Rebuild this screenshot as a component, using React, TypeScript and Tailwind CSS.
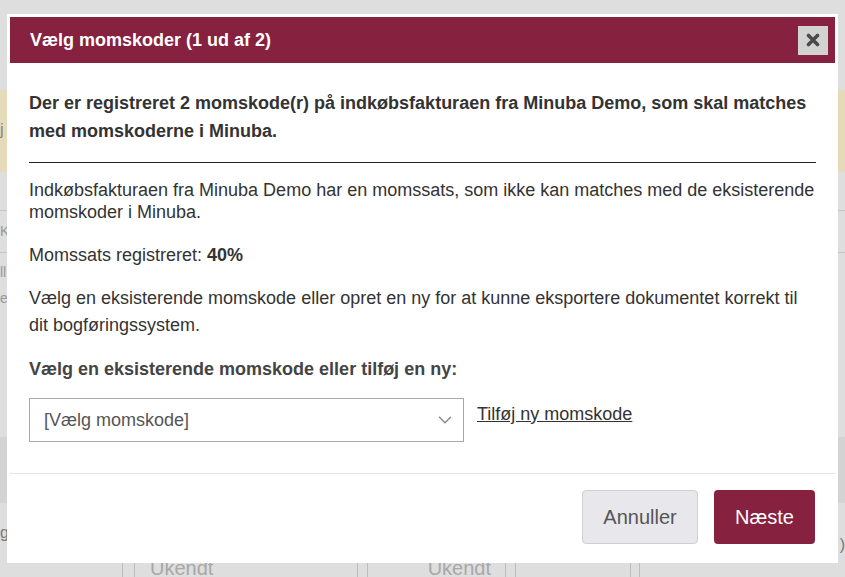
import { ChevronDown } from 'lucide-react';

const CloseIcon = () => (
	<svg width="14" height="14" viewBox="0 0 14 14" className="block">
		<path
			d="M2.5 2.5 L11.5 11.5 M11.5 2.5 L2.5 11.5"
			stroke="#4a4a4a"
			strokeWidth="3.6"
			strokeLinecap="round"
		/>
	</svg>
);

// dimmed page behind the dialog
const Backdrop = () => {
	return (
		<div className="flex flex-col h-[577px] w-[845px] bg-[#dedede] text-[#999] text-[16px] overflow-hidden">
			<div className="h-[90px] shrink-0" />
			<div className="h-[82px] shrink-0 bg-[#e5dbbb] flex items-end pb-[30px]">
				<span className="text-[#888]">j</span>
			</div>
			<div className="h-[38px] shrink-0" />
			<div className="h-[43px] shrink-0 border-y border-[#c4c4c4] flex items-center">
				<span className="text-[14px]">K</span>
			</div>
			<div className="h-[30px] shrink-0 flex items-end">
				<span className="text-[14px]">ll</span>
			</div>
			<div className="h-[26px] shrink-0 flex items-end">
				<span className="text-[14px]">e</span>
			</div>
			<div className="h-[128px] shrink-0" />
			<div className="h-[66px] shrink-0 bg-[#d3d3d3]" />
			<div className="h-[42px] shrink-0 flex items-end justify-between">
				<span className="text-[#777] text-[16px]">g</span>
				<span className="text-[#777] text-[16px] mb-[-12px]">)</span>
			</div>
			<div className="flex h-[40px] shrink-0 text-[20px] text-[#a8a8a8]">
				<div className="w-[123px] border-r border-[#bbb]" />
				<div className="w-[12px] border-r border-[#bbb]" />
				<div className="w-[223px] border-r border-[#bbb] pl-[15px] pt-[13px] leading-[20px]">
					Ukendt
				</div>
				<div className="w-[10px] border-r border-[#bbb]" />
				<div className="w-[138px] border-r border-[#bbb] text-right pr-[14px] pt-[13px] leading-[20px]">
					Ukendt
				</div>
				<div className="w-[10px] border-r border-[#bbb]" />
				<div className="w-[115px] border-r border-[#bbb]" />
				<div className="w-[9px] border-r border-[#bbb]" />
			</div>
		</div>
	);
};

const App = () => {
	return (
		<div className="relative w-[845px] h-[577px] overflow-hidden font-['Liberation_Sans',Arial,sans-serif]">
			<Backdrop />

			<div className="absolute left-[7px] top-[14px] w-[831px] h-[549px] bg-white p-[3px] flex flex-col">
				<div className="h-[46px] shrink-0 bg-[#86213f] flex items-center justify-between pl-[20px] pr-[7px]">
					<h2 className="text-white font-bold text-[18px] leading-none">
						Vælg momskoder (1 ud af 2)
					</h2>
					<button className="w-[30px] h-[29px] bg-[#d2d2d2] flex items-center justify-center">
						<CloseIcon />
					</button>
				</div>

				<div className="px-[19px] text-[#333] text-[18px]">
					<p className="mt-[26px] font-bold leading-[28px]">
						Der er registreret 2 momskode(r) på indkøbsfakturaen fra Minuba Demo, som skal matches
						med momskoderne i Minuba.
					</p>
					<hr className="mt-[17px] border-0 border-t border-[#222]" />
					<p className="mt-[16px] leading-[22px]">
						Indkøbsfakturaen fra Minuba Demo har en momssats, som ikke kan matches med de eksisterende
						momskoder i Minuba.
					</p>
					<p className="mt-[21px] leading-[22px]">
						Momssats registreret: <b>40%</b>
					</p>
					<p className="mt-[19px] leading-[27px]">
						Vælg en eksisterende momskode eller opret en ny for at kunne eksportere dokumentet korrekt til
						dit bogføringssystem.
					</p>
					<p className="mt-[19px] font-bold leading-[22px] text-[#444]">
						Vælg en eksisterende momskode eller tilføj en ny:
					</p>
					<div className="mt-[18px] flex items-start gap-[13px]">
						<div className="w-[435px] h-[44px] border border-[#a9a9a9] flex items-center justify-between pl-[14px] pr-[7px] text-[18px] text-[#555]">
							<span>[Vælg momskode]</span>
							<ChevronDown size={22} strokeWidth={1.5} color="#888" />
						</div>
						<a href="#" className="mt-[5px] underline text-[#333] text-[18px] leading-[22px]">
							Tilføj ny momskode
						</a>
					</div>
				</div>

				<div className="mt-[31px] border-t border-[#e5e5e5] flex justify-end gap-[16px] pt-[16px] pr-[20px]">
					<button className="w-[116px] h-[54px] rounded-[4px] bg-[#e8e8ec] border border-[#cfcfcf] text-[#555] text-[20px]">
						Annuller
					</button>
					<button className="w-[101px] h-[54px] rounded-[4px] bg-[#86213f] text-white text-[20px]">
						Næste
					</button>
				</div>
			</div>
		</div>
	);
};

export default App;
